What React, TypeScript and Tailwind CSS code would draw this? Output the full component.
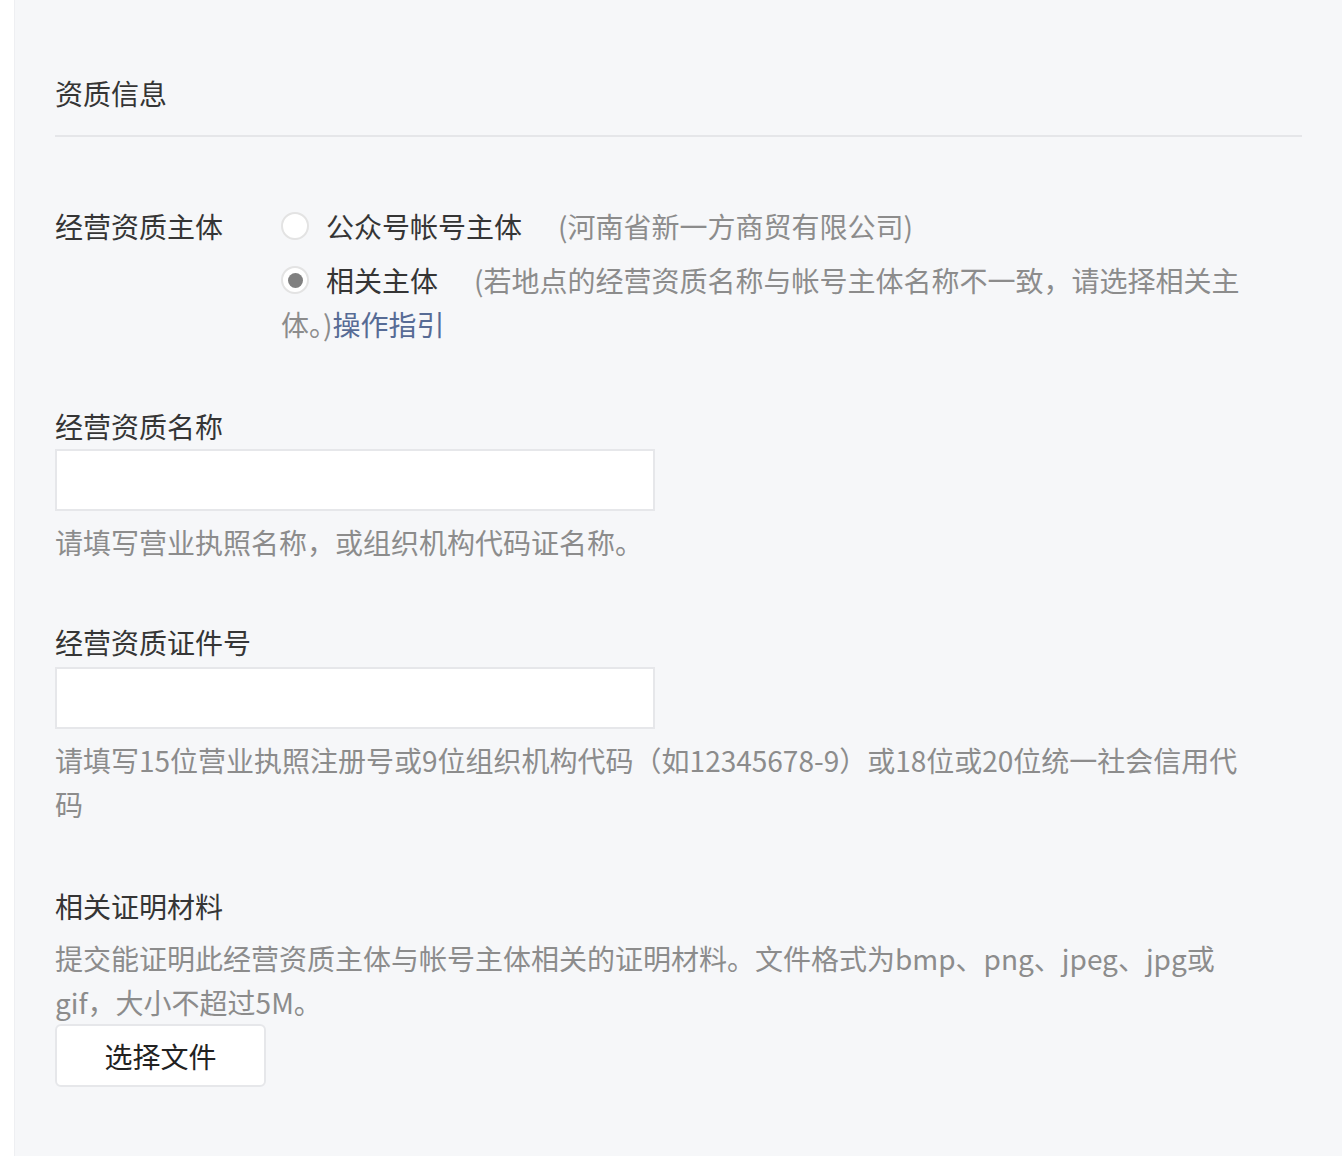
import React, { useState } from "react";

const FONT = { fontFamily: '"Noto Sans CJK SC", "Noto Sans", sans-serif' };

function Radio({ checked }: { checked: boolean }) {
  return (
    <span className="flex w-[28px] h-[28px] shrink-0 rounded-full border-2 border-[#e3e3e3] bg-white items-center justify-center">
      {checked && <span className="w-[15px] h-[15px] rounded-full bg-[#808080]" />}
    </span>
  );
}

function TextInput() {
  return <input type="text" className="block w-[600px] h-[62px] border-2 border-[#e6e7ea] bg-white outline-none px-3" />;
}

export default function App() {
  const [subject, setSubject] = useState("related");

  return (
    <div className="bg-white min-h-[1156px] text-[28px] leading-[44px] text-[#353535]" style={FONT}>
      <div className="ml-[14px] w-[1328px] min-h-[1156px] bg-[#f6f7f9] border-l border-[#eeeff2] px-[40px] pb-[60px]">
        <div className="pt-[71px]">资质信息</div>
        <div className="mt-[20px] h-[2px] bg-[#e5e6e9]" />

        {/* 经营资质主体 */}
        <div className="mt-[67px] flex">
          <div className="w-[226px] shrink-0">经营资质主体</div>
          <div>
            <div className="flex items-center whitespace-nowrap cursor-pointer" onClick={() => setSubject("account")}>
              <Radio checked={subject === "account"} />
              <span className="ml-[17px]">公众号帐号主体</span>
              <span className="ml-[36px] text-[#8c8c8c]">(河南省新一方商贸有限公司)</span>
            </div>
            <div className="mt-[10px] cursor-pointer" onClick={() => setSubject("related")}>
              <div className="flex items-center whitespace-nowrap">
                <Radio checked={subject === "related"} />
                <span className="ml-[17px]">相关主体</span>
                <span className="ml-[36px] text-[#8c8c8c]">(若地点的经营资质名称与帐号主体名称不一致，请选择相关主</span>
              </div>
              <div className="whitespace-nowrap">
                <span className="text-[#8c8c8c]">体。)</span>
                <a href="#" className="text-[#576b95]">操作指引</a>
              </div>
            </div>
          </div>
        </div>

        {/* 经营资质名称 */}
        <div className="mt-[58px]">经营资质名称</div>
        <div className="mt-[1px]">
          <TextInput />
        </div>
        <div className="mt-[9px] text-[#8c8c8c]">请填写营业执照名称，或组织机构代码证名称。</div>

        {/* 经营资质证件号 */}
        <div className="mt-[56px]">经营资质证件号</div>
        <div className="mt-[3px]">
          <TextInput />
        </div>
        <div className="mt-[9px] text-[#8c8c8c]">
          <div className="whitespace-nowrap">请填写15位营业执照注册号或9位组织机构代码（如12345678-9）或18位或20位统一社会信用代</div>
          <div>码</div>
        </div>

        {/* 相关证明材料 */}
        <div className="mt-[58px]">相关证明材料</div>
        <div className="mt-[8px] text-[#8c8c8c]">
          <div className="whitespace-nowrap">提交能证明此经营资质主体与帐号主体相关的证明材料。文件格式为bmp、png、jpeg、jpg或</div>
          <div>gif，大小不超过5M。</div>
        </div>
        <button className="w-[211px] h-[63px] bg-white border-2 border-[#e6e7ea] rounded-[6px] text-[28px] text-[#222]">
          选择文件
        </button>
      </div>
    </div>
  );
}
